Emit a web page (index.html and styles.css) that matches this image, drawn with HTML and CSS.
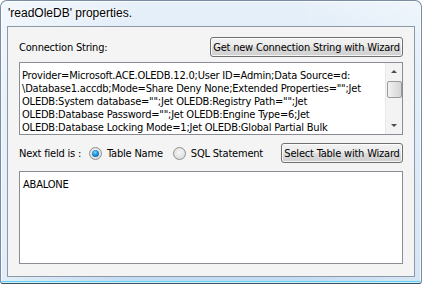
FILE: index.html
```html
<!DOCTYPE html>
<html lang="en">
<head>
    <meta charset="UTF-8">
    <title>'readOleDB' properties.</title>
    <link rel="stylesheet" href="styles.css">
</head>
<body>
    <div class="window">
        <div class="titlebar">'readOleDB' properties.</div>

        <div class="panel">
            <div class="row top-row">
                <span class="label">Connection String:</span>
                <button class="btn btn-wide">Get new Connection String with Wizard</button>
            </div>

            <div class="textbox conn">
                <div class="text">Provider=Microsoft.ACE.OLEDB.12.0;User ID=Admin;Data Source=d:
\Database1.accdb;Mode=Share Deny None;Extended Properties="";Jet
OLEDB:System database="";Jet OLEDB:Registry Path="";Jet
OLEDB:Database Password="";Jet OLEDB:Engine Type=6;Jet
OLEDB:Database Locking Mode=1;Jet OLEDB:Global Partial Bulk</div>
                <!-- fake vista scrollbar -->
                <div class="scrollbar">
                    <span class="arrow up"></span>
                    <span class="thumb"></span>
                    <span class="arrow down"></span>
                </div>
            </div>

            <div class="row radio-row">
                <span class="label">Next field is :</span>
                <label class="radio checked"><span class="dot"></span>Table Name</label>
                <label class="radio"><span class="dot"></span>SQL Statement</label>
                <button class="btn btn-table">Select Table with Wizard</button>
            </div>

            <div class="textbox value">
                <div class="text">ABALONE</div>
            </div>
        </div>
    </div>
</body>
</html>
```

FILE: styles.css
```css
* {
    margin: 0;
    padding: 0;
    box-sizing: border-box;
}

body {
    width: 422px;
    height: 284px;
    overflow: hidden;
    background: #fff;
    font-family: 'DejaVu Sans Condensed', 'DejaVu Sans', sans-serif;
    font-stretch: condensed;
    font-size: 11px;
    letter-spacing: -0.2px;
    color: #000;
}

/* Vista glass frame */
.window {
    width: 422px;
    height: 284px;
    display: flex;
    flex-direction: column;
    padding: 0 6px 6px 6px;
    border: 1px solid #7a8ca3;
    border-bottom-color: #3e4c5e;
    border-radius: 7px 7px 3px 3px;
    background:
        linear-gradient(to right, rgba(255,255,255,0.5), rgba(255,255,255,0) 30%, rgba(255,255,255,0) 70%, rgba(255,255,255,0.3)),
        linear-gradient(to bottom, #e8f1fa 0%, #d6e6f6 30%, #c4dbf2 100%);
    box-shadow: inset 0 0 0 1px rgba(255,255,255,0.7), inset 0 -2px 0 #5fd3f3;
}

.titlebar {
    height: 26px;
    padding: 5px 0 0 1px;
    font-family: 'Liberation Sans', sans-serif;
    font-stretch: normal;
    letter-spacing: 0;
    font-size: 12px;
    color: #000;
    text-shadow: 0 0 6px #fff, 0 0 3px #fff;
}

.panel {
    flex: 1;
    display: flex;
    flex-direction: column;
    padding: 10px 11px 12px 11px;
    background: #f4f4f4;
    border: 1px solid #8e99a6;
}

.row {
    display: flex;
    align-items: center;
    height: 20px;
}

.top-row {
    justify-content: space-between;
    margin-bottom: 5px;
}

.label {
    white-space: nowrap;
}

.btn {
    height: 20px;
    padding: 0;
    font-family: inherit;
    font-stretch: condensed;
    font-size: 11px;
    letter-spacing: -0.2px;
    text-align: center;
    color: #000;
    border: 1px solid #707070;
    border-radius: 3px;
    background: linear-gradient(to bottom, #f2f2f2 0%, #ebebeb 48%, #dddddd 52%, #cfcfcf 100%);
    box-shadow: inset 0 0 0 1px rgba(255,255,255,0.8);
    white-space: nowrap;
}

.btn-wide {
    width: 193px;
}

.btn-table {
    width: 122px;
    margin-left: auto;
}

.textbox {
    display: flex;
    background: #fff;
    border: 1px solid #8a8d94;
    overflow: hidden;
}

.textbox .text {
    flex: 1;
    white-space: pre;
    line-height: 13px;
    padding: 6px 0 0 2px;
    overflow: hidden;
}

.conn {
    height: 73px;
}

.value {
    height: 93px;
    margin-top: 8px;
}

.value .text {
    padding: 6px 0 0 3px;
}

.radio-row {
    margin-top: 8px;
}

.radio {
    display: flex;
    align-items: center;
    gap: 5px;
    margin-left: 8px;
    white-space: nowrap;
}

.radio + .radio {
    margin-left: 10px;
}

.dot {
    width: 13px;
    height: 13px;
    border-radius: 50%;
    border: 1px solid #8e8f8f;
    background: radial-gradient(circle at 50% 40%, #f6f6f6, #d6d6d6);
    position: relative;
}

.checked .dot::after {
    content: "";
    position: absolute;
    left: 2px;
    top: 2px;
    width: 7px;
    height: 7px;
    border-radius: 50%;
    background: radial-gradient(circle at 45% 35%, #7fd4ff 0%, #1c8fd6 45%, #0d4a8c 100%);
}

.scrollbar {
    width: 17px;
    display: flex;
    flex-direction: column;
    align-items: center;
    background: #f3f3f3;
    border-left: 1px solid #e8e8e8;
    padding: 0 1px;
}

.arrow {
    width: 0;
    height: 0;
    border-left: 3px solid transparent;
    border-right: 3px solid transparent;
}

.arrow.up {
    margin-top: 7px;
    border-bottom: 3px solid #4d4d4d;
}

.arrow.down {
    margin-top: auto;
    margin-bottom: 7px;
    border-top: 3px solid #4d4d4d;
}

.thumb {
    width: 15px;
    height: 17px;
    margin-top: 8px;
    border: 1px solid #9a9a9a;
    border-radius: 2px;
    background: linear-gradient(to right, #f2f2f2, #e3e3e3 50%, #d4d4d4);
}
```
